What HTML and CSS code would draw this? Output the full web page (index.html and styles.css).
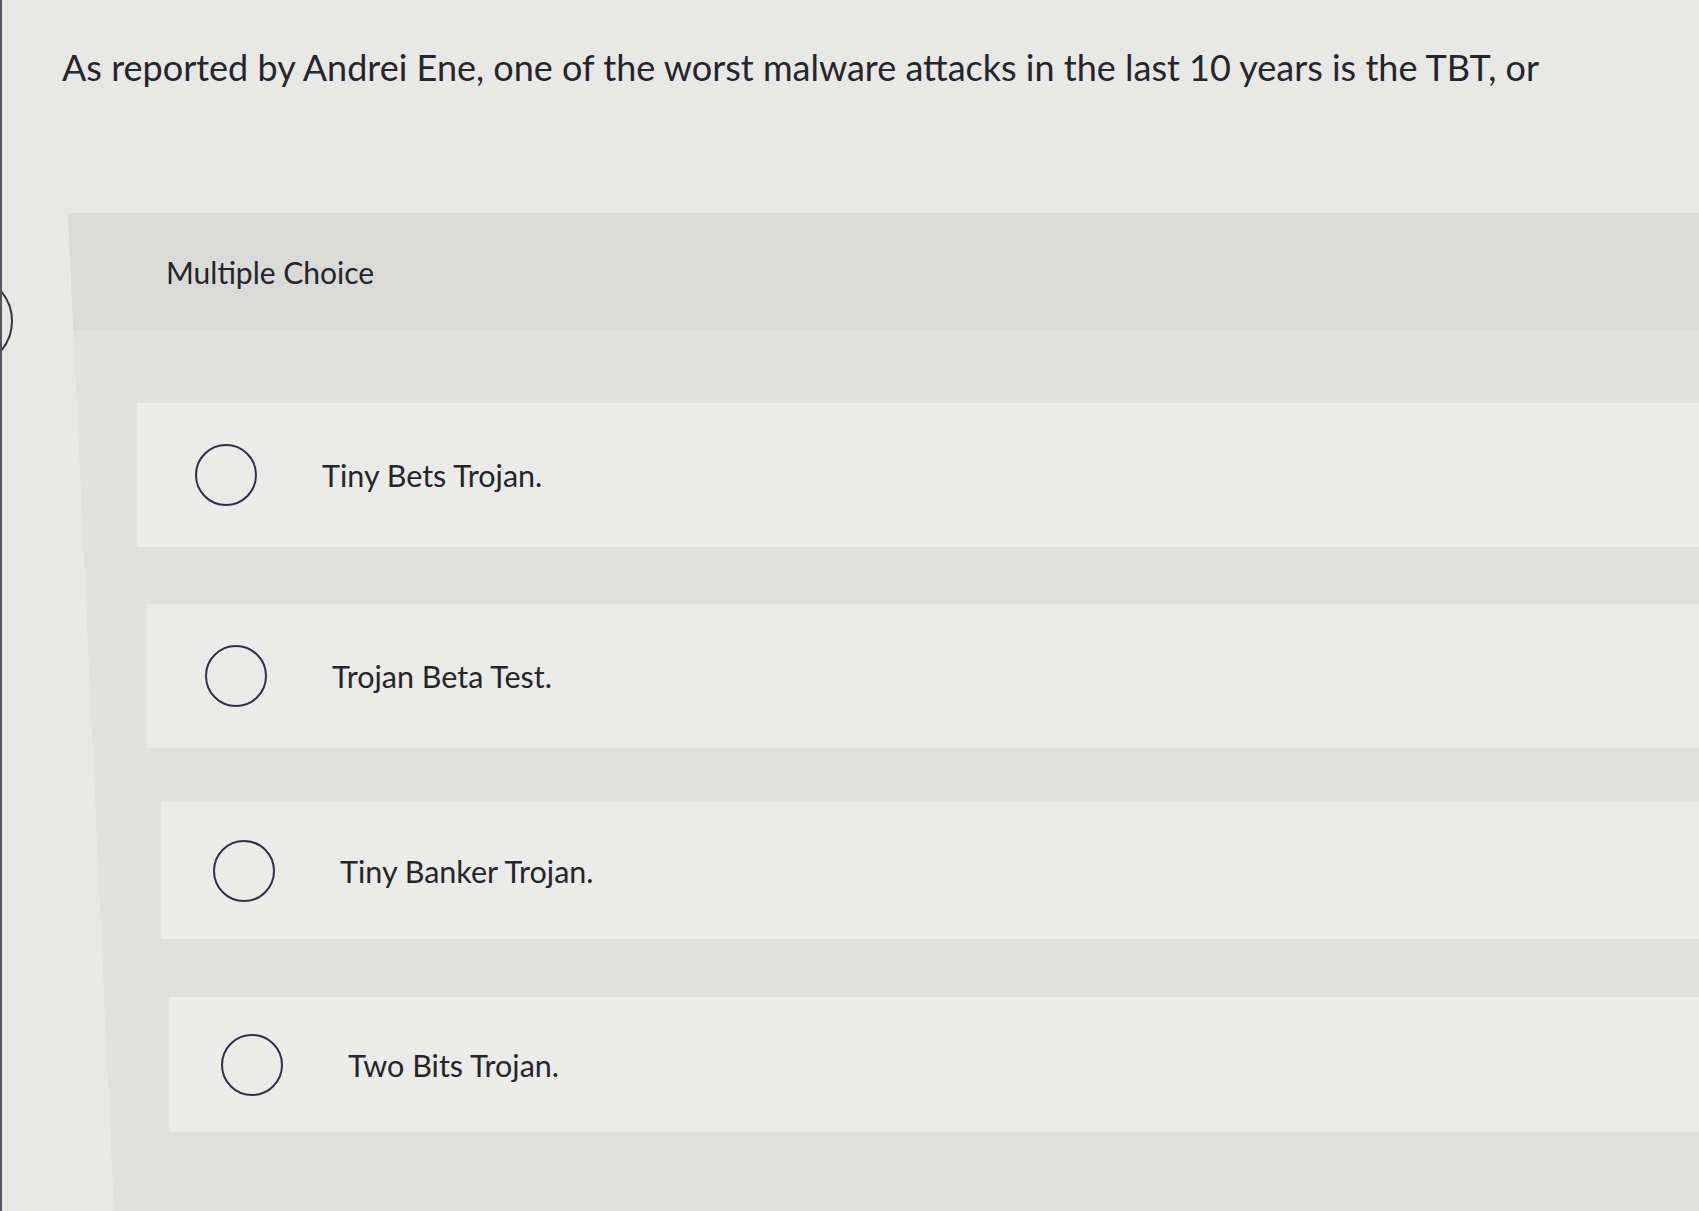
FILE: index.html
```html
<!DOCTYPE html>
<html lang="en">
<head>
<meta charset="utf-8">
<title>Multiple Choice</title>
<link rel="stylesheet" href="styles.css">
</head>
<body>
<div class="edge-arc">
  <svg width="16" height="66" viewBox="0 0 16 66"><circle cx="-34" cy="33" r="46" fill="none" stroke="#34353f" stroke-width="2"/></svg>
</div>
<main class="page">
  <p class="question">As reported by Andrei Ene, one of the worst malware attacks in the last 10 years is the TBT, or</p>
  <section class="panel">
    <header class="panel-head">Multiple Choice</header>
    <div class="options">
      <label class="option opt-1">
        <span class="radio"></span>
        <span class="opt-text">Tiny Bets Trojan.</span>
      </label>
      <label class="option opt-2">
        <span class="radio"></span>
        <span class="opt-text">Trojan Beta Test.</span>
      </label>
      <label class="option opt-3">
        <span class="radio"></span>
        <span class="opt-text">Tiny Banker Trojan.</span>
      </label>
      <label class="option opt-4">
        <span class="radio"></span>
        <span class="opt-text">Two Bits Trojan.</span>
      </label>
    </div>
  </section>
</main>
</body>
</html>
```
FILE: styles.css
```css
html, body {
  margin: 0;
  padding: 0;
}
body {
  background: #e8e8e6;
  font-family: "Lato", "Open Sans", sans-serif;
  color: #25252c;
  height: 1211px;
  overflow: hidden;
  border-left: 2px solid #55565c;
  box-sizing: border-box;
  position: relative;
}
.edge-arc {
  position: absolute;
  left: -2px;
  top: 288px;
  line-height: 0;
}
.page {
  display: flex;
  flex-direction: column;
}
.question {
  margin: 0;
  padding: 47px 0 0 60px;
  font-size: 36px;
  line-height: 40px;
}
.panel {
  margin: 126px 0 0 66px;
  background: #e1e1df;
  height: 998px;
  clip-path: polygon(0 0, 100% 0, 100% 100%, 46px 100%);
  display: flex;
  flex-direction: column;
}
.panel-head {
  height: 118px;
  background: #dadad8;
  display: flex;
  align-items: center;
  padding-left: 98px;
  font-size: 30px;
}
.options {
  padding-top: 72px;
  display: flex;
  flex-direction: column;
}
.option {
  background: #ebebe9;
  display: flex;
  align-items: center;
}
.opt-1 { margin-left: 69px; height: 144px; }
.opt-2 { margin-left: 79px; height: 144px; margin-top: 57px; }
.opt-3 { margin-left: 93px; height: 137px; margin-top: 54px; }
.opt-4 { margin-left: 101px; height: 135px; margin-top: 58px; }
.radio {
  width: 58px;
  height: 58px;
  border: 2.5px solid #2f3148;
  border-radius: 50%;
  margin-left: 58px;
  flex: none;
}
.opt-3 .radio, .opt-4 .radio { margin-left: 52px; }
.opt-text {
  margin-left: 65px;
  font-size: 30.5px;
}
```
